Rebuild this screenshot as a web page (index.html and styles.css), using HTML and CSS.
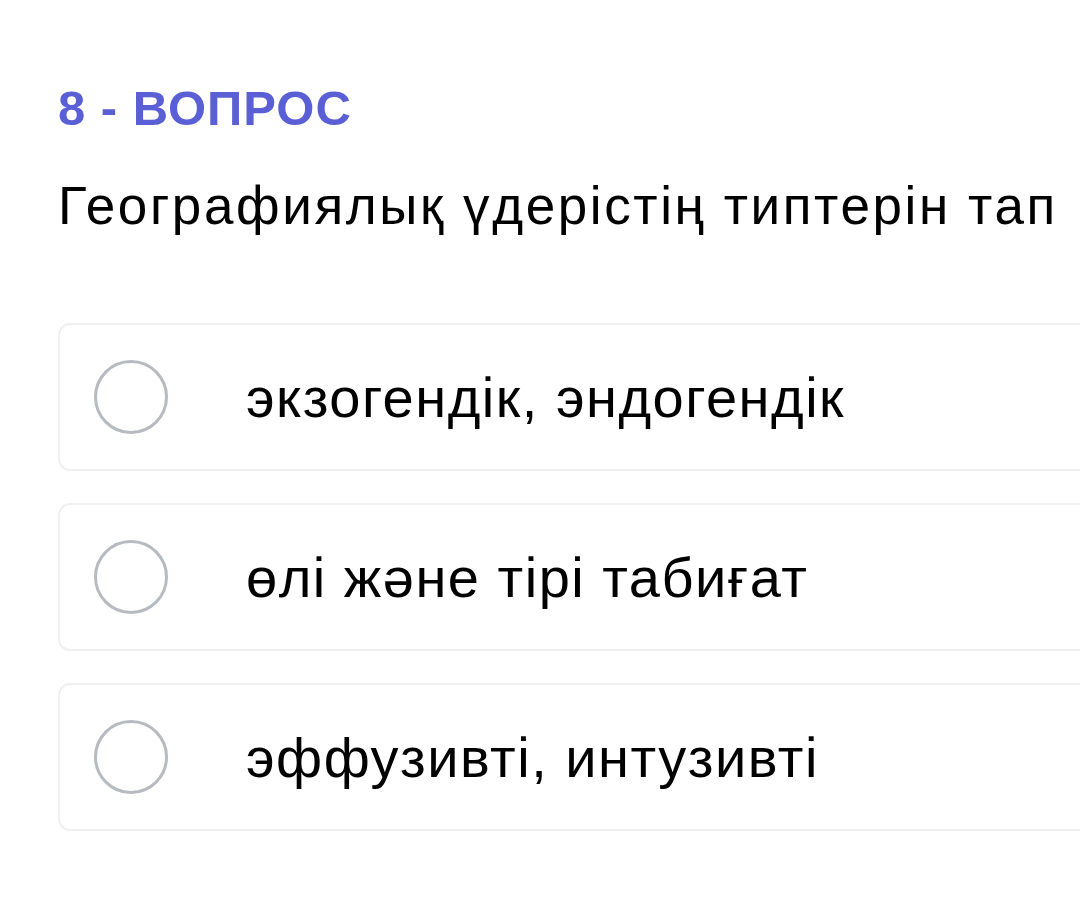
FILE: index.html
```html
<!DOCTYPE html>
<html lang="kk">
<head>
    <meta charset="UTF-8">
    <meta name="viewport" content="width=device-width, initial-scale=1.0">
    <title>8 - ВОПРОС</title>
    <link rel="stylesheet" href="styles.css">
</head>
<body>
    <div class="quiz">
        <div class="q-number">8 - ВОПРОС</div>
        <div class="q-text">Географиялық үдерістің типтерін тап</div>

        <ul class="options">
            <li class="option"><span class="radio"></span><span class="label">экзогендік, эндогендік</span></li>
            <li class="option"><span class="radio"></span><span class="label">өлі және тірі табиғат</span></li>
            <li class="option"><span class="radio"></span><span class="label">эффузивті, интузивті</span></li>
        </ul>
    </div>
</body>
</html>
```

FILE: styles.css
```css
body {
    margin: 0;
    background: #ffffff;
    color: #000000;
    font-family: "Liberation Sans", Arial, sans-serif;
    overflow: hidden;
}
.quiz {
    padding: 78px 0 0 58px;
}
.q-number {
    color: #5a5fd6;
    font-size: 49px;
    font-weight: bold;
    line-height: 60px;
    letter-spacing: 1px;
}
.q-text {
    margin-top: 38px;
    font-size: 53px;
    line-height: 60px;
    letter-spacing: 2.6px;
}
.options {
    list-style: none;
    margin: 87px 0 0 0;
    padding: 0;
    width: 1080px;
}
.option {
    display: flex;
    align-items: center;
    height: 144px;
    margin-bottom: 32px;
    padding-left: 34px;
    border: 2px solid #f0f0f2;
    border-radius: 12px;
    background: #fff;
}
.radio {
    width: 68px;
    height: 68px;
    border: 3px solid #b6bbc2;
    border-radius: 50%;
    flex-shrink: 0;
}
.label {
    margin-left: 78px;
    font-size: 56px;
    letter-spacing: 1.5px;
}
```
